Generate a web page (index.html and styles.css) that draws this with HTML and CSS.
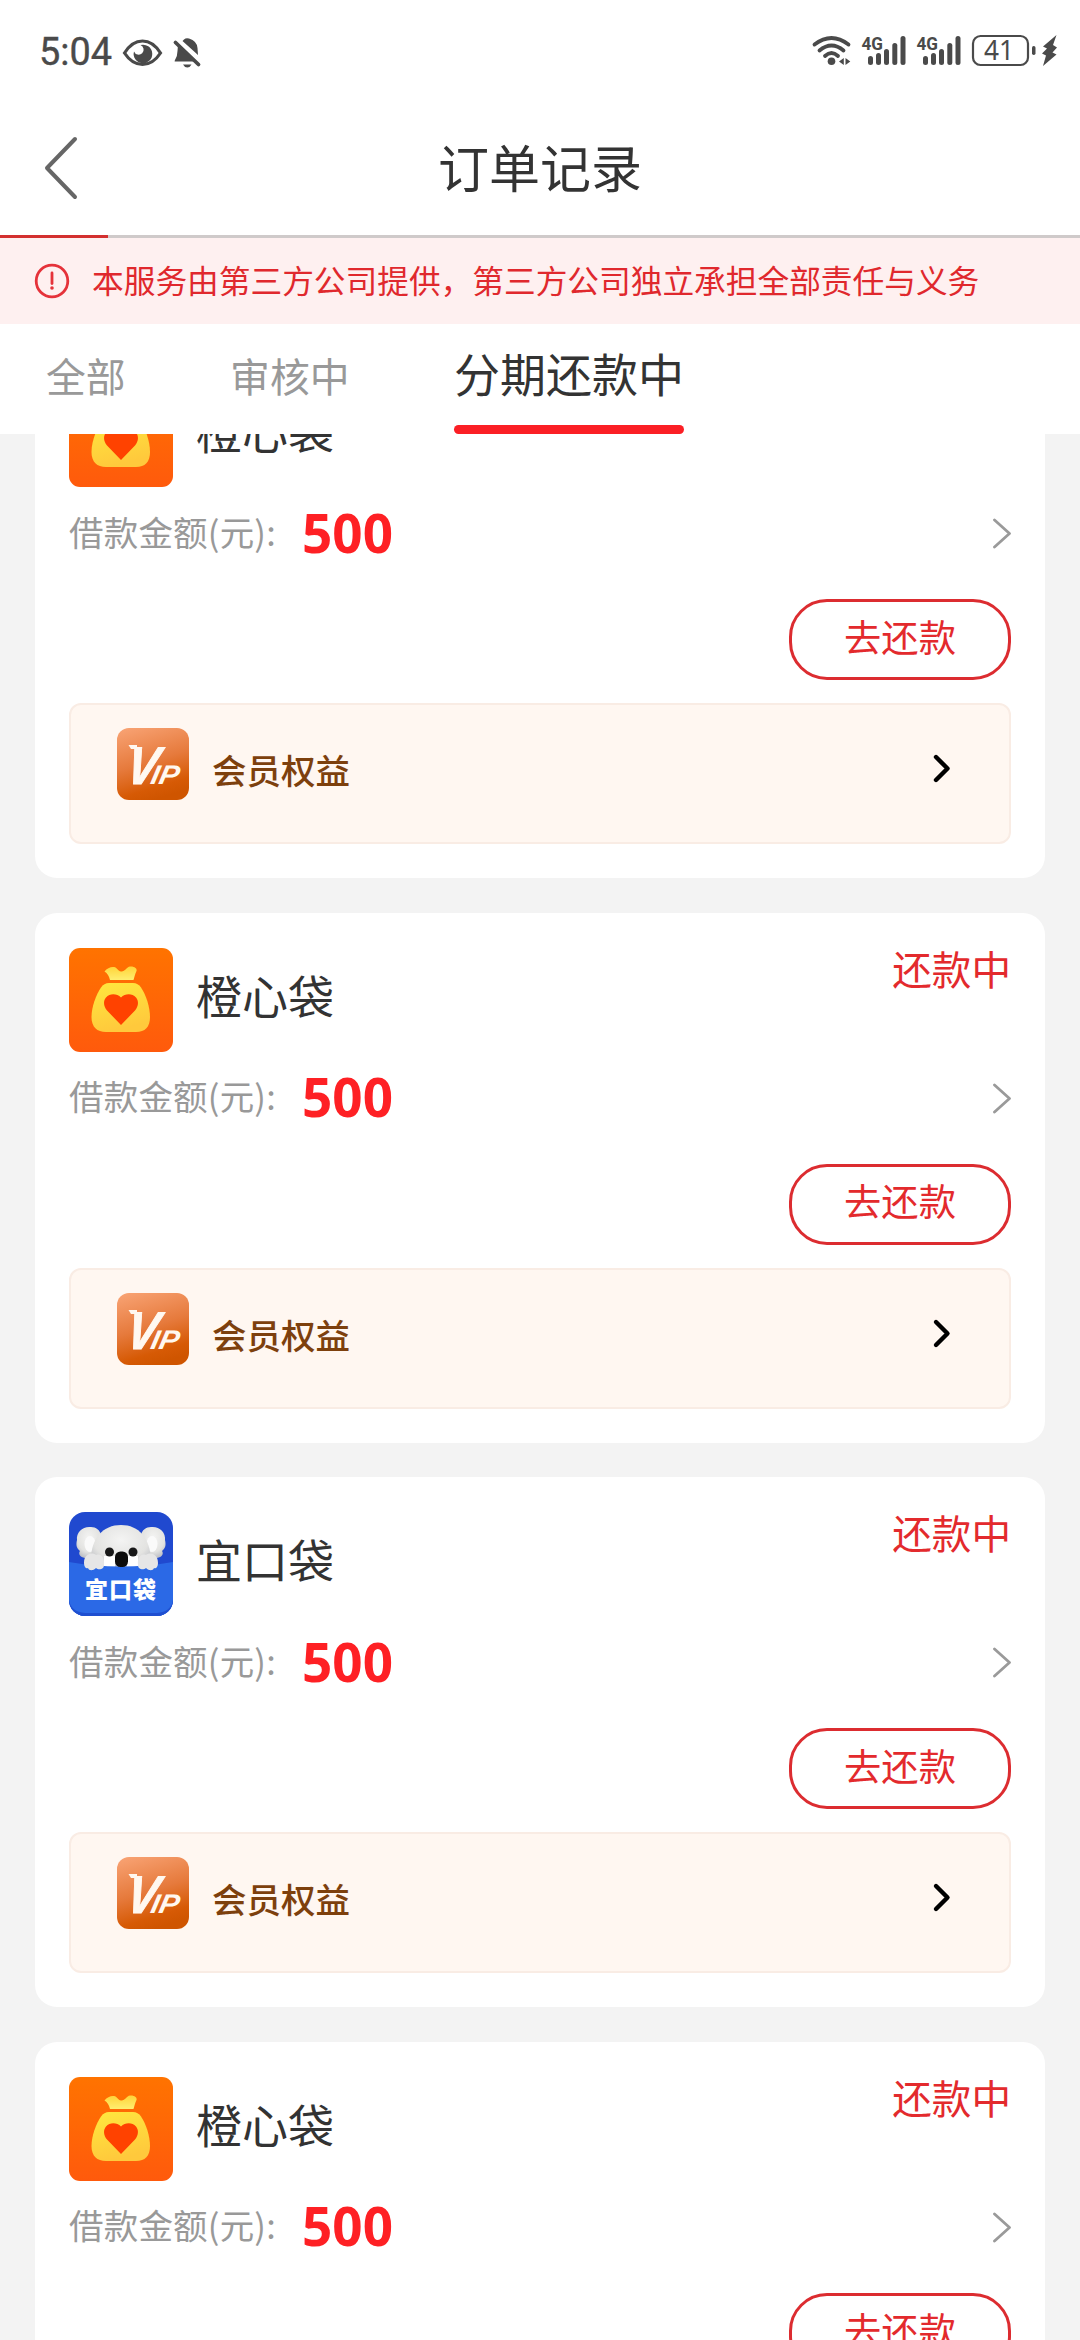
FILE: index.html
```html
<!DOCTYPE html>
<html lang="zh-CN">
<head>
<meta charset="utf-8">
<title>订单记录</title>
<link rel="stylesheet" href="styles.css">
</head>
<body>
<svg class="defs" width="0" height="0" aria-hidden="true">
  <defs>
    <linearGradient id="g-orange" x1="0" y1="0" x2="0" y2="1"><stop offset="0" stop-color="#ff7300"/><stop offset="1" stop-color="#ff5a0c"/></linearGradient>
    <linearGradient id="g-bag" x1="0" y1="0" x2="0.3" y2="1"><stop offset="0" stop-color="#ffe83e"/><stop offset="1" stop-color="#ffc93c"/></linearGradient>
    <linearGradient id="g-tie" x1="0" y1="0" x2="0" y2="1"><stop offset="0" stop-color="#ffd338"/><stop offset="1" stop-color="#ffee70"/></linearGradient>
    <linearGradient id="g-vip" x1="0.2" y1="0" x2="0.5" y2="1"><stop offset="0" stop-color="#f7a070"/><stop offset="0.5" stop-color="#e67a3c"/><stop offset="0.85" stop-color="#d65a05"/><stop offset="1" stop-color="#cf5500"/></linearGradient>
    <radialGradient id="g-fur" cx="0.5" cy="0.35" r="0.65"><stop offset="0" stop-color="#f4f4f3"/><stop offset="0.7" stop-color="#e3e3e1"/><stop offset="1" stop-color="#bfc1c6"/></radialGradient>
    <clipPath id="c-koala"><rect width="104" height="104" rx="16"/></clipPath>
  </defs>
  <symbol id="i-bag" viewBox="0 0 104 104">
    <rect width="104" height="104" rx="11" fill="url(#g-orange)"/>
    <path d="M35.500 23.500C38 20 42 18.500 45 19C48 19.500 49 23 52 23.500C56 24 57.500 19 61 18.500C65 18 68.500 20.500 67.500 23C66 26 65.500 29 64.500 32H41C40 28 38.500 25.500 35.500 23.500Z" fill="url(#g-tie)"/>
    <path d="M40 35H64Q69 35 72 39.500C77 47 81 59 81 69C81 79 76 84 67 84H37C28 84 22.500 79 22.500 69C22.500 59 27 47 32 39.500Q35 35 40 35Z" fill="url(#g-bag)"/>
    <path d="M52 77L38 62.500C34.500 58.500 34 53 37 49.500C41 45 48 45.500 52 49.500C56 45.500 63 45 67 49.500C70 53 69.500 58.500 66 62.500Z" fill="#ff4200"/>
  </symbol>
  <symbol id="i-koala" viewBox="0 0 104 104">
    <g clip-path="url(#c-koala)">
      <rect width="104" height="104" fill="#2049cf"/>
      <path d="M8 28C7 20 14 14 22 15C27 15 31 18 32 23V46H16C11 45 9 42 11 39C7 36 7 32 8 28Z" fill="url(#g-fur)"/>
      <path d="M96 28C97 20 90 14 82 15C77 15 73 18 72 23V46H88C93 45 95 42 93 39C97 36 97 32 96 28Z" fill="url(#g-fur)"/>
      <ellipse cx="21" cy="32" rx="5.500" ry="8" fill="#fafafa"/><ellipse cx="83" cy="32" rx="5.500" ry="8" fill="#fafafa"/>
      <path d="M22 48C22 26 34 13 52 13S81 26 82 48V56H22Z" fill="url(#g-fur)"/>
      <path d="M35 44H46V55H35ZM58 44H69V55H58Z" fill="#fff"/>
      <circle cx="40.500" cy="40" r="4.500" fill="#181818"/><circle cx="64" cy="40" r="4.500" fill="#181818"/>
      <path d="M0 50Q52 59 104 50V104H0Z" fill="#2b69e6"/>
      <rect x="46" y="39.500" width="13" height="15.500" rx="5.500" fill="#0c0c0c"/>
      <path d="M15 51C15 41 24 40 27 43C32 41 36 46 35 53C35 58 29 58 27 56C24 59 20 59 19 56C17 57 15 55 15 51ZM69 53C68 46 72 41 77 43C80 40 89 41 89 51C89 55 87 57 85 56C84 59 80 59 77 56C75 58 69 58 69 53Z" fill="#e6e6e6"/>
      <path d="M0 88Q2 100 16 101H88Q102 100 104 88V104H0Z" fill="#1f4fd0"/>
      <text x="16" y="86" class="koala-text" textLength="71" lengthAdjust="spacing">宜口袋</text>
    </g>
  </symbol>
  <symbol id="i-vip" viewBox="0 0 72 72">
    <rect width="72" height="72" rx="12" fill="url(#g-vip)"/>
    <path d="M11.500 17H20V21H14Z" fill="#fff8f0"/>
    <text transform="translate(7.500 55.500) skewX(-10)" class="vip-v" textLength="31" lengthAdjust="spacingAndGlyphs">V</text>
    <text transform="translate(32.500 55.500) skewX(-12)" class="vip-ip" textLength="28" lengthAdjust="spacingAndGlyphs">IP</text>
  </symbol>
  <symbol id="i-next" viewBox="0 0 20 32"><path d="M3.500 3L18.500 16.500L3.500 30" fill="none" stroke="#9a9a9a" stroke-width="2.800" stroke-linecap="round" stroke-linejoin="round"/></symbol>
  <symbol id="i-next-bold" viewBox="0 0 20 32"><path d="M5 5L16.500 16.500L5 28" fill="none" stroke="#000" stroke-width="4.400" stroke-linecap="round" stroke-linejoin="round"/></symbol>
</svg>

<div class="statusbar">
  <svg width="1080" height="103" viewBox="0 0 1080 103">
    <g fill="#4a4a4a">
      <text x="39" y="64.800" class="clock" textLength="73" lengthAdjust="spacingAndGlyphs">5:04</text>
      <path d="M124.500 53Q132 41 142.500 41T160.500 53Q153 64.500 142.500 64.500T124.500 53Z" fill="none" stroke="#4a4a4a" stroke-width="3.200"/>
      <path d="M140.500 45A9.300 9.300 0 1 1 134 51.500A5 5 0 1 0 140.500 45Z"/>
      <path d="M184 39.500Q186 37.500 189 38.500Q197 41 197.500 48L198 55L182.500 41Z"/>
      <path d="M178 45L194 61.500H175Q174 61.500 175 60Q177.500 56 177.500 51Z"/>
      <path d="M183 64.500H191.500Q190 67.500 187.300 67.500T183 64.500Z"/>
      <path d="M175.500 42.500L198.500 64.500" stroke="#4a4a4a" stroke-width="3.800" stroke-linecap="round"/>
      <g fill="none" stroke="#4a4a4a" stroke-width="3.800" stroke-linecap="round">
        <path d="M814.500 44.500Q831.500 31.500 848.500 44.500M819.500 50.500Q831.500 40.500 843.500 50.500M825 56Q831.500 50 838 56"/>
      </g>
      <circle cx="831.500" cy="61.300" r="3.800"/>
      <path d="M843.800 58V65L839 61.500ZM845.500 58V65L850.300 61.500Z"/>
      <g id="bars">
        <rect x="868" y="56" width="5" height="9" rx="2.500"/><rect x="876" y="53" width="5" height="12" rx="2.500"/><rect x="884" y="49" width="5" height="16" rx="2.500"/><rect x="892.300" y="43" width="5" height="22" rx="2.500"/><rect x="900.500" y="36" width="5" height="29" rx="2.500"/>
        <text x="861.500" y="50" class="net" textLength="21.500" lengthAdjust="spacingAndGlyphs">4G</text>
      </g>
      <use href="#bars" x="55"/>
      <rect x="973" y="36" width="55" height="29" rx="7.500" fill="none" stroke="#4a4a4a" stroke-width="2.200"/>
      <text x="984" y="60" class="batt" textLength="30" lengthAdjust="spacingAndGlyphs">41</text>
      <rect x="1032" y="46" width="3.500" height="9" rx="1.700"/>
      <path d="M1056.500 35L1043 46.500L1047 48.500L1042 53.500L1046 55.500L1043 66L1056.500 54.500L1052.500 52.500L1057 47.500L1053 45Z"/>
    </g>
  </svg>
</div>

<header class="navbar">
  <svg class="back" width="40" height="68" viewBox="0 0 40 68"><path d="M33 5L5 34L33 63" fill="none" stroke="#666" stroke-width="4" stroke-linecap="round" stroke-linejoin="round"/></svg>
  <h1 class="title">订单记录</h1>
</header>
<div class="progress"><div class="progress-value"></div></div>

<div class="notice">
  <svg width="36" height="36" viewBox="0 0 36 36"><circle cx="18" cy="18" r="15.800" fill="none" stroke="#e5323a" stroke-width="2.800"/><path d="M18 10V20.500" stroke="#e5323a" stroke-width="2.800" stroke-linecap="round"/><circle cx="18" cy="25" r="1.800" fill="#e5323a"/></svg>
  <span class="notice-text">本服务由第三方公司提供，第三方公司独立承担全部责任与义务</span>
</div>

<nav class="tabs">
  <span class="tab">全部</span>
  <span class="tab">审核中</span>
  <span class="tab active">分期还款中</span>
</nav>

<main class="list">
  <section class="card">
    <div class="head"><svg class="logo"><use href="#i-bag"/></svg><h2 class="name">橙心袋</h2><span class="state">还款中</span></div>
    <div class="amount"><span class="label">借款金额(元):</span><strong class="value">500</strong><svg class="next"><use href="#i-next"/></svg></div>
    <div class="actions"><button class="repay">去还款</button></div>
    <div class="vip"><svg class="vip-logo"><use href="#i-vip"/></svg><span class="vip-name">会员权益</span><svg class="next"><use href="#i-next-bold"/></svg></div>
  </section>
  <section class="card">
    <div class="head"><svg class="logo"><use href="#i-bag"/></svg><h2 class="name">橙心袋</h2><span class="state">还款中</span></div>
    <div class="amount"><span class="label">借款金额(元):</span><strong class="value">500</strong><svg class="next"><use href="#i-next"/></svg></div>
    <div class="actions"><button class="repay">去还款</button></div>
    <div class="vip"><svg class="vip-logo"><use href="#i-vip"/></svg><span class="vip-name">会员权益</span><svg class="next"><use href="#i-next-bold"/></svg></div>
  </section>
  <section class="card">
    <div class="head"><svg class="logo"><use href="#i-koala"/></svg><h2 class="name">宜口袋</h2><span class="state">还款中</span></div>
    <div class="amount"><span class="label">借款金额(元):</span><strong class="value">500</strong><svg class="next"><use href="#i-next"/></svg></div>
    <div class="actions"><button class="repay">去还款</button></div>
    <div class="vip"><svg class="vip-logo"><use href="#i-vip"/></svg><span class="vip-name">会员权益</span><svg class="next"><use href="#i-next-bold"/></svg></div>
  </section>
  <section class="card">
    <div class="head"><svg class="logo"><use href="#i-bag"/></svg><h2 class="name">橙心袋</h2><span class="state">还款中</span></div>
    <div class="amount"><span class="label">借款金额(元):</span><strong class="value">500</strong><svg class="next"><use href="#i-next"/></svg></div>
    <div class="actions"><button class="repay">去还款</button></div>
    <div class="vip"><svg class="vip-logo"><use href="#i-vip"/></svg><span class="vip-name">会员权益</span><svg class="next"><use href="#i-next-bold"/></svg></div>
  </section>
</main>
</body>
</html>
```
FILE: styles.css
```css
* { box-sizing: border-box; }
body {
  margin: 0;
  width: 1080px;
  height: 2340px;
  overflow: hidden;
  display: flex;
  flex-direction: column;
  background: #fff;
  color: #333;
  font-family: "Noto Sans CJK SC", sans-serif;
}
svg { display: block; flex: none; }
.defs { position: absolute; }
h1, h2 { margin: 0; font-weight: 400; }

.statusbar { height: 103px; flex: none; }
.clock { font: 400 39px Roboto, sans-serif; stroke: #4a4a4a; stroke-width: 0.4px; }
.net { font: 700 19px Roboto, sans-serif; }
.batt { font: 400 27px "Noto Sans", sans-serif; }

.navbar { height: 132px; flex: none; display: grid; grid-template-columns: 100px 1fr 100px; align-items: center; }
.back { margin: 0 0 2px 42px; }
.title { text-align: center; font-size: 51px; line-height: 70px; padding-bottom: 7px; }
.progress { height: 3px; flex: none; background: #cfcaca; }
.progress-value { width: 108px; height: 3px; background: #d3302f; }

.notice { height: 86px; flex: none; display: flex; align-items: center; gap: 22px; padding-left: 34px; background: #fef0f0; color: #e0282d; }
.notice-text { font-size: 31.700px; line-height: 44px; padding-bottom: 5px; }

.tabs { height: 110px; flex: none; display: flex; align-items: stretch; padding-left: 46px; line-height: 102px; }
.tab { font-size: 39.800px; color: #999; margin-right: 104.500px; }
.tab.active { display: flex; flex-direction: column; justify-content: space-between; font-size: 46px; color: #333; margin: 0; line-height: 97px; }
.tab.active::after { content: ""; height: 9px; border-radius: 4.500px; background: #fb1f25; }

.list { flex: 1; min-height: 0; overflow: hidden; background: #f3f3f3; padding: 0 35px; display: flex; flex-direction: column; gap: 34.500px; }
.card { flex: none; height: 530px; padding: 35px 34px 34px; background: #fff; border-radius: 22px; }
.card:first-child { margin-top: -86px; }
.head { height: 104px; display: flex; gap: 23px; }
.logo { width: 104px; height: 104px; }
.name { flex: 1; font-size: 46px; line-height: 92px; }
.state { font-size: 39.600px; line-height: 40px; color: #e32a2d; }
.amount { height: 92px; display: flex; align-items: center; }
.label { font-size: 34.500px; letter-spacing: 0.200px; color: #999; width: 233px; white-space: nowrap; padding-bottom: 5px; }
.value { flex: 1; font: 700 53px/60px "Noto Sans", sans-serif; color: #fe2024; padding-bottom: 1px; }
.next { width: 20px; height: 32px; }
.actions { display: flex; justify-content: flex-end; padding: 20px 0 23px; }
.repay { width: 222px; height: 81px; padding: 0 0 8px; border: 3px solid #dc2c30; border-radius: 38px; background: #fff; color: #e32a2d; font: 400 37.300px/50px "Noto Sans CJK SC", sans-serif; }
.vip { height: 141px; display: flex; align-items: flex-start; padding: 23px 58px 0 46px; border: 2px solid #f9ece4; border-radius: 12px; background: #fff7f1; }
.vip-logo { width: 72px; height: 72px; }
.vip-name { flex: 1; margin-left: 23px; font-size: 34.500px; font-weight: 500; line-height: 82px; color: #7d400d; }
.vip .next { margin-top: 24px; }
.vip-v { font: italic 700 53px "Liberation Sans", sans-serif; fill: #fff8f0; stroke: #fff8f0; stroke-width: 1px; }
.vip-ip { font: italic 700 27px "Liberation Sans", sans-serif; fill: #fff8f0; }
.koala-text { font: 900 23px "Noto Sans CJK SC", sans-serif; fill: #fff; }
```
